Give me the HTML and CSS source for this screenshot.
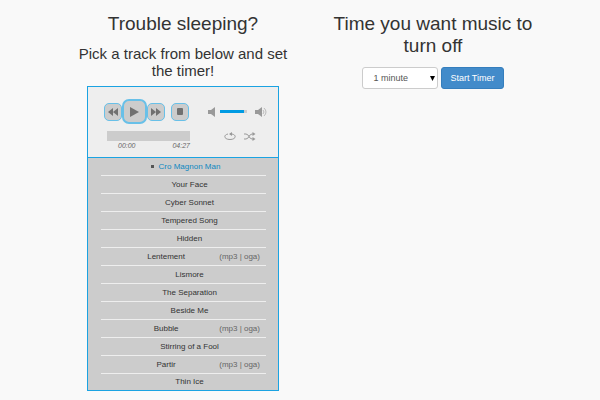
FILE: index.html
```html
<!DOCTYPE html>
<html lang="en">
<head>
<meta charset="utf-8">
<title>Trouble sleeping?</title>
<link rel="stylesheet" href="styles.css">
</head>
<body>
<main class="page">
  <section class="column">
    <h1 class="title">Trouble sleeping?</h1>
    <h2 class="subtitle">Pick a track from below and set the timer!</h2>
    <div class="player">
      <div class="interface">
        <div class="controls">
          <button class="key" type="button" aria-label="Previous"><svg width="10" height="8" viewBox="0 0 10 8"><path d="M5 0v8L0 4zM10 0v8L5 4z"/></svg></button>
          <button class="key key-play" type="button" aria-label="Play"><svg width="9" height="10" viewBox="0 0 9 10"><path d="M0 0l9 5-9 5z"/></svg></button>
          <button class="key" type="button" aria-label="Next"><svg width="10" height="8" viewBox="0 0 10 8"><path d="M0 0v8l5-4zM5 0v8l5-4z"/></svg></button>
          <button class="key key-stop" type="button" aria-label="Stop"><svg width="6" height="7" viewBox="0 0 6 7"><rect width="6" height="7" rx="1"/></svg></button>
        </div>
        <div class="volume">
          <button class="plain" type="button" aria-label="Mute"><svg width="8" height="10" viewBox="0 0 8 10"><path d="M0 3h3l4-3v10L3 7H0z"/></svg></button>
          <div class="level"><div class="level-value"></div></div>
          <button class="plain plain-max" type="button" aria-label="Maximum volume"><svg width="13" height="10" viewBox="0 0 13 10"><path d="M0 3h3l4-3v10L3 7H0z"/><path class="wave" d="M8 3q2 2 0 4M9 1q4 4 0 8"/></svg></button>
        </div>
        <div class="timeline">
          <div class="seek"></div>
          <div class="times"><span>00:00</span><span>04:27</span></div>
        </div>
        <div class="modes">
          <button class="plain" type="button" aria-label="Repeat"><svg width="12" height="9" viewBox="0 0 12 9"><path class="line" d="M4 2C-1 3 0 7.500 6 7.500S13 3 8 2H6"/><path d="M8 0v4L5 2z"/></svg></button>
          <button class="plain" type="button" aria-label="Shuffle"><svg width="12" height="9" viewBox="0 0 12 9"><path class="line" d="M0 2h2c3 0 3 5 6 5h2M0 7h2c3 0 3-5 6-5h2"/><path d="M8.500 0l3 2-3 2zM8.500 5l3 2-3 2z"/></svg></button>
        </div>
      </div>
      <ul class="tracks">
        <li class="current"><a href="#">Cro Magnon Man</a></li>
        <li><a href="#">Your Face</a></li>
        <li><a href="#">Cyber Sonnet</a></li>
        <li><a href="#">Tempered Song</a></li>
        <li><a href="#">Hidden</a></li>
        <li><a href="#">Lentement</a><span class="media">(<a href="#">mp3</a> | <a href="#">oga</a>)</span></li>
        <li><a href="#">Lismore</a></li>
        <li><a href="#">The Separation</a></li>
        <li><a href="#">Beside Me</a></li>
        <li><a href="#">Bubble</a><span class="media">(<a href="#">mp3</a> | <a href="#">oga</a>)</span></li>
        <li><a href="#">Stirring of a Fool</a></li>
        <li><a href="#">Partir</a><span class="media">(<a href="#">mp3</a> | <a href="#">oga</a>)</span></li>
        <li><a href="#">Thin Ice</a></li>
      </ul>
    </div>
  </section>
  <section class="column">
    <h1 class="title">Time you want music to turn off</h1>
    <form class="timer">
      <div class="select-wrap">
        <select class="minutes" aria-label="Time until music turns off">
          <option>1 minute</option>
          <option>5 minutes</option>
          <option>10 minutes</option>
        </select>
        <svg class="caret" width="5" height="5" viewBox="0 0 5 5"><path d="M0 0h5L2.500 5z"/></svg>
      </div>
      <button class="start" type="button">Start Timer</button>
    </form>
  </section>
</main>
</body>
</html>
```
FILE: styles.css
```css
* { box-sizing: border-box; }

body {
  margin: 0;
  background: #f9f9f9;
  color: #333;
  font-family: "Liberation Sans", Arial, sans-serif;
}

button { padding: 0; font-family: inherit; cursor: pointer; }
a { color: inherit; text-decoration: none; }
svg { display: block; fill: #707070; }

.page {
  display: grid;
  grid-template-columns: 1fr 1fr;
  padding: 13px 42px 8px 58px;
}

.column { padding: 0 15px; text-align: center; }

.title { margin: 0 0 10px; font-size: 19px; line-height: 22px; font-weight: 400; }
.subtitle { margin: 0 0 7px; font-size: 15px; line-height: 17px; font-weight: 400; }

.player {
  max-width: 192px;
  margin: 0 auto;
  border: 1px solid #1ba3e2;
  background: #ccc;
}

.interface {
  display: grid;
  grid-template-columns: 88px 1fr;
  column-gap: 16px;
  padding: 12px 10px 7px 15px;
  border-bottom: 1px solid #1ba3e2;
  background: #eee;
}

.controls { display: flex; align-items: center; padding-left: 1px; }

.key {
  display: flex;
  flex: none;
  align-items: center;
  justify-content: center;
  width: 18px;
  height: 18px;
  border: 1px solid #68c0e8;
  border-radius: 5px;
  background: #ccc;
}

.key-play { width: 25px; height: 25px; border-width: 2px; border-radius: 7px; }
.key-stop { margin-left: 6px; }

.volume { display: flex; align-items: center; gap: 4px; padding-left: 1px; }
.plain { border: 0; background: none; }
.plain-max { margin-left: auto; }
.plain svg { fill: #999; }
.wave, .plain .line { fill: none; stroke: #999; }
.plain .wave { fill: none; stroke: #bbb; }

.level { width: 27px; height: 3px; background: #ccc; }
.level-value { width: 90%; height: 100%; background: #009be3; }

.timeline { padding: 7px 1px 0 4px; }
.seek { height: 10px; background: #ccc; }
.times {
  display: flex;
  justify-content: space-between;
  padding-left: 11px;
  color: #666;
  font-size: 7px;
  line-height: 9px;
  font-style: italic;
}

.modes { display: flex; align-items: flex-start; gap: 8px; padding: 8px 0 0 17px; }

.tracks {
  margin: 0;
  padding: 0 12px 0 13px;
  font-size: 8px;
  line-height: 17px;
  list-style: none;
}

.tracks li { display: flex; padding-left: 12px; border-bottom: 1px solid #eee; }
.tracks li > a { flex: 1; }
.tracks li:last-child { border-bottom: 0; line-height: 16px; }
.tracks .current { color: #0d88c1; padding-left: 4px; }
.current a::before {
  content: "";
  display: inline-block;
  width: 3px;
  height: 3px;
  margin-right: 5px;
  background: #555;
  vertical-align: 1px;
}
.media { margin-right: 6px; color: #666; }

.timer { display: flex; justify-content: center; gap: 3px; }
.select-wrap { position: relative; }

.minutes {
  display: block;
  width: 76px;
  height: 22px;
  padding: 0 10px;
  border: 1px solid #ccc;
  border-radius: 3px;
  background: #fff;
  color: #555;
  font-family: inherit;
  font-size: 9px;
  appearance: none;
}

.caret { position: absolute; top: 9px; right: 3px; fill: #000; pointer-events: none; }

.start {
  height: 22px;
  padding: 0 8px;
  border: 1px solid #357ebd;
  border-radius: 3px;
  background: #428bca;
  color: #fff;
  font-size: 9px;
}
```
